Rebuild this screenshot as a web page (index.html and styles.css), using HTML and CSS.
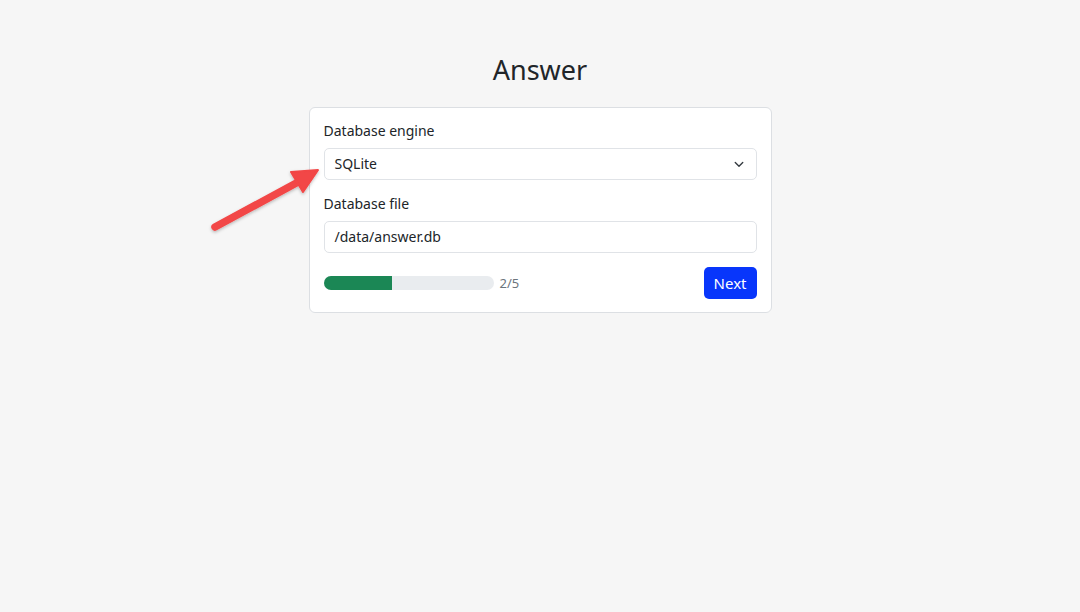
FILE: index.html
```html
<!doctype html>
<html lang="en">
  <head>
    <meta charset="UTF-8" />
    <meta name="viewport" content="width=device-width, initial-scale=1.0" />
    <title>Answer</title>
    <link rel="stylesheet" href="styles.css">
  </head>
  <body>
    <main class="page">
      <h1 class="title">Answer</h1>
      <form class="card">
        <label class="field-label" for="engine">Database engine</label>
        <div class="select">
          <span id="engine" class="select-value">SQLite</span>
          <svg class="chevron" width="12" height="12" viewBox="0 0 16 16" aria-hidden="true">
            <path d="M3 6l5 5 5-5" fill="none" stroke="#343a40" stroke-width="1.8" stroke-linecap="round" stroke-linejoin="round" />
          </svg>
        </div>

        <label class="field-label" for="file">Database file</label>
        <div id="file" class="input">/data/answer.db</div>

        <div class="footer">
          <div class="progress">
            <div class="track"><div class="bar" style="width: 40%"></div></div>
            <span class="step">2/5</span>
          </div>
          <button type="button" class="btn">Next</button>
        </div>
      </form>
    </main>

    <svg class="arrow" width="1080" height="612" viewBox="0 0 1080 612" aria-hidden="true">
      <defs>
        <filter id="shadow" x="-20%" y="-20%" width="140%" height="140%">
          <feDropShadow dx="0" dy="1.5" stdDeviation="1.5" flood-color="#000" flood-opacity="0.25" />
        </filter>
      </defs>
      <g filter="url(#shadow)" fill="#f24646" stroke="#f24646">
        <line x1="215" y1="227" x2="300" y2="181" stroke-width="7.5" stroke-linecap="round" />
        <polygon points="318,170 291,172 303,192" stroke-width="2" stroke-linejoin="round" />
      </g>
    </svg>
  </body>
</html>
```

FILE: styles.css
```css
body {
  margin: 0;
  background: #f6f6f6;
  color: #212529;
  font-family: "Noto Sans", "Open Sans", sans-serif;
  font-size: 14px;
}

.page {
  display: flex;
  flex-direction: column;
  align-items: center;
  padding-top: 52px;
}

.title {
  margin: 0 0 19px;
  font-size: 27px;
  font-weight: 400;
  line-height: 36px;
}

.card {
  display: flex;
  flex-direction: column;
  box-sizing: border-box;
  width: 463px;
  padding: 13px 14px 13px;
  border: 1px solid #dcdfe3;
  border-radius: 6px;
  background: #fff;
}

.field-label {
  display: block;
  line-height: 20px;
  margin-bottom: 7px;
}

.select,
.input {
  box-sizing: border-box;
  height: 32px;
  padding: 0 10px;
  border: 1px solid #e0e3e7;
  border-radius: 5px;
  line-height: 30px;
  margin-bottom: 14px;
}

.select {
  display: flex;
  align-items: center;
  justify-content: space-between;
}

.chevron {
  margin-right: 1px;
}

.footer {
  display: flex;
  align-items: center;
  justify-content: space-between;
}

.progress {
  display: flex;
  align-items: center;
  gap: 6px;
}

.track {
  width: 170px;
  height: 14px;
  border-radius: 7px;
  background: #e9ecef;
  overflow: hidden;
}

.bar {
  height: 100%;
  background: #1b8755;
}

.step {
  color: #6c757d;
  font-size: 13px;
}

.btn {
  height: 32px;
  padding: 0 10px 1px;
  border: 0;
  border-radius: 5px;
  background: #0836fb;
  color: #fff;
  font-family: inherit;
  font-size: 15px;
}

.arrow {
  position: absolute;
  top: 0;
  left: 0;
  pointer-events: none;
}
```
